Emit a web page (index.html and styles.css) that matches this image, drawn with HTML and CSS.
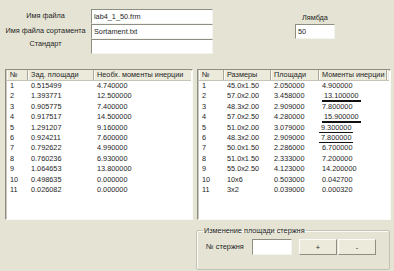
FILE: index.html
```html
<!DOCTYPE html>
<html lang="ru">
<head>
  <meta charset="UTF-8" />
  <title>Сортамент</title>
  <link rel="stylesheet" href="styles.css">
</head>
<body>

  <div class="top">
    <div class="files">
      <label class="cap">Имя файла</label>
      <div class="field">lab4_1_50.frm</div>
      <label class="cap">Имя файла сортамента</label>
      <div class="field">Sortament.txt</div>
      <label class="cap cap-up">Стандарт</label>
      <div class="field"></div>
    </div>
    <div class="lambda">
      <label class="cap">Лямбда</label>
      <div class="field small">50</div>
    </div>
  </div>

  <div class="lists">
    <div class="list left-list">
      <div class="row head">
        <div>№</div><div>Зад. площади</div><div>Необх. моменты инерции</div>
      </div>
      <div class="row"><div>1</div><div>0.515499</div><div>4.740000</div></div>
      <div class="row"><div>2</div><div>1.393771</div><div>12.500000</div></div>
      <div class="row"><div>3</div><div>0.905775</div><div>7.400000</div></div>
      <div class="row"><div>4</div><div>0.917517</div><div>14.500000</div></div>
      <div class="row"><div>5</div><div>1.291207</div><div>9.160000</div></div>
      <div class="row"><div>6</div><div>0.924211</div><div>7.600000</div></div>
      <div class="row"><div>7</div><div>0.792622</div><div>4.990000</div></div>
      <div class="row"><div>8</div><div>0.760236</div><div>6.930000</div></div>
      <div class="row"><div>9</div><div>1.064653</div><div>13.800000</div></div>
      <div class="row"><div>10</div><div>0.498635</div><div>0.000000</div></div>
      <div class="row"><div>11</div><div>0.026082</div><div>0.000000</div></div>
    </div>

    <div class="list right-list">
      <div class="row head">
        <div>№</div><div>Размеры</div><div>Площади</div><div>Моменты инерции</div><div></div>
      </div>
      <div class="row"><div>1</div><div>45.0x1.50</div><div>2.050000</div><div>4.900000</div></div>
      <div class="row"><div>2</div><div>57.0x2.00</div><div>3.458000</div><div><span class="mark">13.100000</span></div></div>
      <div class="row"><div>3</div><div>48.3x2.00</div><div>2.909000</div><div>7.800000</div></div>
      <div class="row"><div>4</div><div>57.0x2.50</div><div>4.280000</div><div><span class="mark">15.900000</span></div></div>
      <div class="row"><div>5</div><div>51.0x2.00</div><div>3.079000</div><div><span class="mark shift">9.300000</span></div></div>
      <div class="row"><div>6</div><div>48.3x2.00</div><div>2.909000</div><div><span class="mark shift">7.800000</span></div></div>
      <div class="row"><div>7</div><div>50.0x1.50</div><div>2.286000</div><div>6.700000</div></div>
      <div class="row"><div>8</div><div>51.0x1.50</div><div>2.333000</div><div>7.200000</div></div>
      <div class="row"><div>9</div><div>55.0x2.50</div><div>4.123000</div><div>14.200000</div></div>
      <div class="row"><div>10</div><div>10x6</div><div>0.503000</div><div>0.042700</div></div>
      <div class="row"><div>11</div><div>3x2</div><div>0.039000</div><div>0.000320</div></div>
    </div>
  </div>

  <div class="bottom">
    <fieldset class="group">
      <legend>Изменение площади стержня</legend>
      <div class="group-row">
        <label class="cap">№ стержня</label>
        <div class="field num"></div>
        <button class="btn">+</button>
        <button class="btn">-</button>
      </div>
    </fieldset>
  </div>

</body>
</html>
```

FILE: styles.css
```css
body {
  margin: 0;
  width: 394px;
  height: 271px;
  overflow: hidden;
  background-color: #e5e4d4;
  color: #1e1e1e;
  font-family: "Liberation Sans", Arial, sans-serif;
  font-size: 7.3px;
}

.top {
  height: 69px;
  box-sizing: border-box;
  padding-top: 9px;
  display: flex;
}
.files {
  display: grid;
  grid-template-columns: 91px 122px;
  grid-auto-rows: 15px;
}
.cap {
  text-align: center;
  line-height: 14px;
}
.cap-up {
  line-height: 10px;
}
.field {
  box-sizing: border-box;
  height: 15px;
  background: white;
  border: 1px solid;
  border-color: #8f8e82 #f4f4ef #f4f4ef #8f8e82;
  padding: 0 2px;
  line-height: 13px;
}
.lambda {
  margin-left: 82px;
  width: 40px;
  padding-top: 2px;
}
.lambda .cap {
  display: block;
  line-height: 13px;
}

.lists {
  display: flex;
  gap: 4px;
  padding-left: 5px;
  height: 151px;
}
.list {
  box-sizing: border-box;
  height: 151px;
  background: white;
  border: 1px solid;
  border-color: #8f8e82 #fbfbf7 #fbfbf7 #8f8e82;
  box-shadow: inset 1px 1px #c9c8ba;
  padding: 0 1px 1px 1px;
}
.left-list {
  width: 188px;
}
.right-list {
  width: 194px;
}
.row {
  display: grid;
  height: 10.4px;
  line-height: 10.4px;
  white-space: nowrap;
}
.row > div {
  padding-left: 3px;
  overflow: hidden;
}
.left-list .row {
  grid-template-columns: 21px 66px 99px;
}
.right-list .row {
  grid-template-columns: 25px 47px 48px 68px 1fr;
}
.row.head {
  height: 10px;
  line-height: 10px;
  background: #ebeadb;
  border-bottom: 1px solid #c5c4b5;
}
.row.head > div {
  border-right: 1px solid #a9a89a;
  box-shadow: inset 1px 0 #fbfbf6;
}
.row.head > div:last-child {
  border-right: none;
}
.mark {
  display: inline-block;
  line-height: 9px;
  padding: 0 2px;
  border-bottom: 2px solid #111;
}
.mark.shift {
  margin-left: -3px;
}

.bottom {
  padding: 6px 0 0 196px;
}
.group {
  box-sizing: border-box;
  width: 194px;
  height: 44px;
  margin: 0;
  padding: 0 0 0 9px;
  border: 1px solid #c3c2b3;
  box-shadow: inset 1px 1px #fbfbf7;
  border-radius: 2px;
}
.group legend {
  padding: 0 1px;
  margin-left: -3px;
  line-height: 9px;
}
.group-row {
  display: flex;
  align-items: center;
  margin-top: 4px;
}
.group-row .cap {
  width: 46px;
  text-align: left;
}
.num {
  width: 40px;
  height: 16px;
}
.btn {
  box-sizing: border-box;
  width: 38px;
  height: 16px;
  margin: 0;
  padding: 0;
  background: #ebeadb;
  border: 1px solid;
  border-color: #fbfbf7 #8f8e82 #8f8e82 #fbfbf7;
  font-family: inherit;
  font-size: 7.3px;
  color: #1e1e1e;
}
.num + .btn {
  margin-left: 7px;
}
.btn + .btn {
  margin-left: 1px;
}
```
